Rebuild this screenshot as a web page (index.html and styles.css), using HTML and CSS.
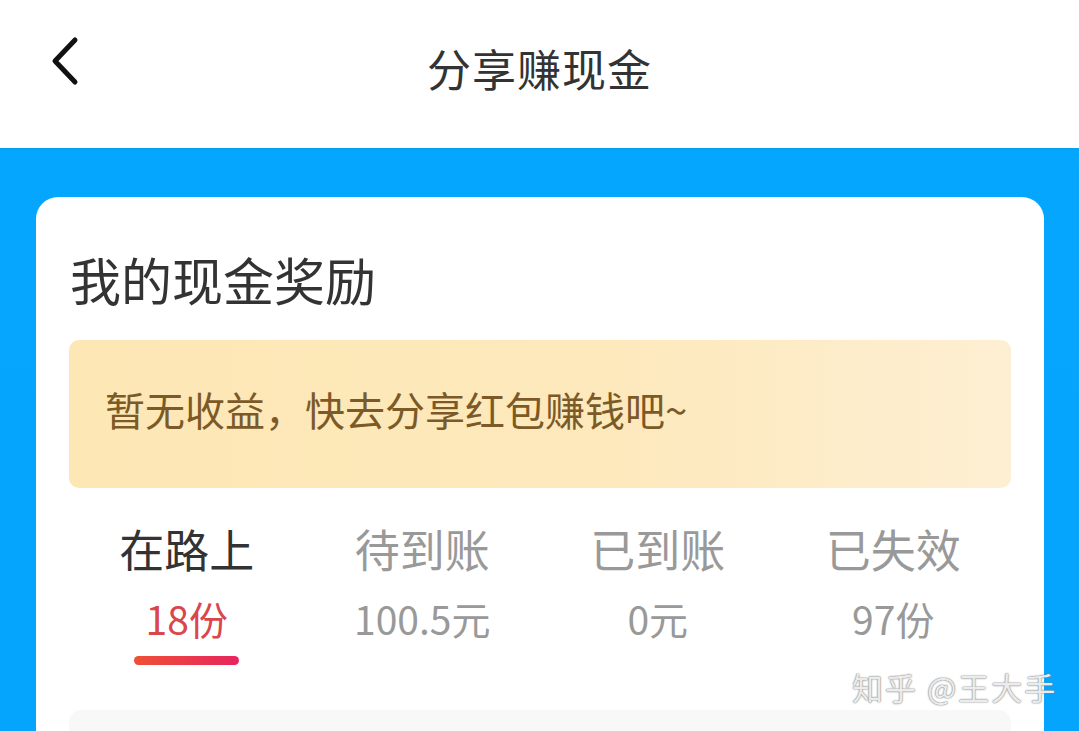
FILE: index.html
```html
<!DOCTYPE html>
<html lang="zh-CN">
<head>
    <meta charset="UTF-8">
    <meta name="viewport" content="width=device-width, initial-scale=1.0">
    <title>分享赚现金</title>
    <link rel="stylesheet" href="styles.css">
</head>
<body>

<header class="topbar">
    <a class="back" href="#">
        <svg width="30" height="50" viewBox="0 0 30 50">
            <path d="M25 4 L5 25 L25 46" fill="none" stroke="#111" stroke-width="5" stroke-linecap="round" stroke-linejoin="round"/>
        </svg>
    </a>
    <h1>分享赚现金</h1>
</header>

<main class="band">
    <section class="card">
        <h2>我的现金奖励</h2>
        <div class="notice">暂无收益，快去分享红包赚钱吧~</div>

        <div class="tabs">
            <div class="tab active">
                <span class="label">在路上</span>
                <span class="value">18份</span>
                <span class="bar"></span>
            </div>
            <div class="tab">
                <span class="label">待到账</span>
                <span class="value">100.5元</span>
            </div>
            <div class="tab">
                <span class="label">已到账</span>
                <span class="value">0元</span>
            </div>
            <div class="tab">
                <span class="label">已失效</span>
                <span class="value">97份</span>
            </div>
        </div>

        <div class="list"></div>
    </section>
    <div class="watermark">知乎 @王大手</div>
</main>

</body>
</html>
```

FILE: styles.css
```css
body {
    margin: 0;
    padding: 0;
    font-family: "Noto Sans CJK SC", "Noto Sans", sans-serif;
    background-color: #05a5fd;
    height: 731px;
    overflow: hidden;
}
.topbar {
    height: 148px;
    box-sizing: border-box;
    padding-bottom: 12px;
    background-color: #fff;
    display: flex;
    align-items: center;
    justify-content: center;
    position: relative;
}
.topbar h1 {
    margin: 0;
    font-size: 44px;
    font-weight: 400;
    color: #333;
    letter-spacing: 1px;
}
.back {
    position: absolute;
    left: 50px;
    top: 36px;
    display: block;
    height: 50px;
}
.band {
    position: relative;
    padding: 49px 35px 0 36px;
    background: linear-gradient(#039fe8 0, #05a6fe 3px, #05a5fd 100%);
    height: 534px;
}
.card {
    background-color: #fff;
    border-radius: 22px 22px 0 0;
    padding: 20px 33px 0 33px;
    height: 514px;
    overflow: hidden;
}
.card h2 {
    margin: 0 0 0 1px;
    font-size: 51px;
    font-weight: 400;
    color: #333;
    line-height: 124px;
    height: 123px;
}
.notice {
    height: 148px;
    box-sizing: border-box;
    padding: 0 0 10px 36px;
    border-radius: 10px;
    background: linear-gradient(90deg, #fde7b5 0%, #fde9bd 60%, #fdefd3 100%);
    color: #7c5a28;
    font-size: 40px;
    display: flex;
    align-items: center;
}
.tabs {
    display: grid;
    grid-template-columns: repeat(4, 1fr);
    padding-top: 30px;
    height: 222px;
    box-sizing: border-box;
}
.tab {
    display: flex;
    flex-direction: column;
    align-items: center;
}
.label {
    font-size: 45px;
    color: #999;
    line-height: 62px;
}
.value {
    font-size: 39px;
    color: #999;
    line-height: 76px;
}
.active .label {
    color: #333;
}
.active .value {
    color: #d9464c;
}
.bar {
    width: 105px;
    height: 9px;
    border-radius: 5px;
    background: linear-gradient(90deg, #ee5036, #e8245f);
}
.list {
    height: 60px;
    background-color: #f8f8f8;
    border-radius: 12px 12px 0 0;
}
.watermark {
    position: absolute;
    left: 852px;
    top: 516px;
    font-size: 31px;
    color: #ececec;
    text-shadow: 0 0 2px #888, 0 0 1px #777;
    letter-spacing: 2px;
}
```
